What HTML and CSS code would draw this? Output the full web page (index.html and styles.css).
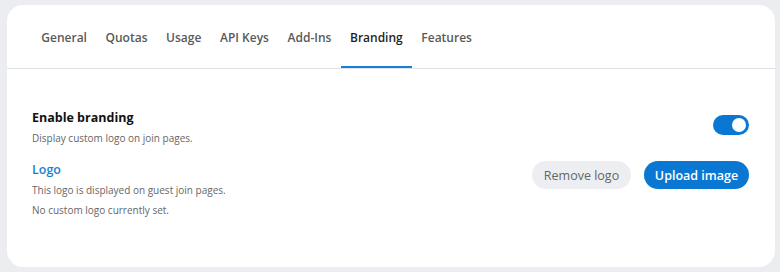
FILE: index.html
```html
<!DOCTYPE html>
<html lang="en">
<head>
    <meta charset="UTF-8">
    <meta name="viewport" content="width=device-width, initial-scale=1.0">
    <title>Branding settings</title>
    <link rel="stylesheet" href="styles.css">
</head>
<body>
    <div class="settings-card">
        <nav class="tabs">
            <a class="tab">General</a>
            <a class="tab">Quotas</a>
            <a class="tab">Usage</a>
            <a class="tab">API Keys</a>
            <a class="tab">Add-Ins</a>
            <a class="tab active">Branding</a>
            <a class="tab">Features</a>
        </nav>

        <div class="panel">
            <div class="setting-row">
                <div class="setting-text">
                    <h3>Enable branding</h3>
                    <p>Display custom logo on join pages.</p>
                </div>
                <label class="switch">
                    <input type="checkbox" checked>
                    <span class="slider"></span>
                </label>
            </div>

            <div class="setting-row logo-row">
                <div class="setting-text">
                    <h3 class="link-title">Logo</h3>
                    <p>This logo is displayed on guest join pages.</p>
                    <p>No custom logo currently set.</p>
                </div>
                <div class="actions">
                    <button class="btn btn-light">Remove logo</button>
                    <button class="btn btn-primary">Upload image</button>
                </div>
            </div>
        </div>
    </div>
</body>
</html>
```

FILE: styles.css
```css
* {
    box-sizing: border-box;
    margin: 0;
    padding: 0;
    font-family: 'Open Sans', 'Noto Sans', sans-serif;
}

body {
    background-color: #ebedf0;
    padding: 5px 5px 5px 7px;
    height: 272px;
}

.settings-card {
    background-color: #fff;
    border-radius: 16px;
    height: 262px;
    width: 768px;
    overflow: hidden;
}

.tabs {
    display: flex;
    padding: 0 25px;
    height: 64px;
    border-bottom: 1px solid #dfe1e5;
}

.tab {
    display: flex;
    align-items: center;
    padding: 3px 9.3px 0;
    font-size: 12px;
    font-weight: 600;
    color: #595959;
    border-bottom: 2px solid transparent;
}

.tab.active {
    color: #1f1f1f;
    border-bottom-color: #1a7fd4;
}

.panel {
    padding: 39px 26px 0 25px;
}

.setting-row {
    display: flex;
    justify-content: space-between;
    align-items: flex-start;
}

.setting-text h3 {
    font-size: 12.5px;
    font-weight: 700;
    color: #111;
    line-height: 20px;
}

.setting-text p {
    font-size: 10px;
    color: #666;
    line-height: 20px;
}

.switch {
    position: relative;
    width: 36px;
    height: 20px;
    margin-top: 7px;
}

.switch input {
    display: none;
}

.slider {
    position: absolute;
    inset: 0;
    border-radius: 10px;
    background-color: #bbb;
}

.switch input:checked + .slider {
    background-color: #0a78d2;
}

.slider::after {
    content: "";
    position: absolute;
    top: 3px;
    left: 3px;
    width: 14px;
    height: 14px;
    border-radius: 50%;
    background-color: #fff;
}

.switch input:checked + .slider::after {
    left: 19px;
}

.logo-row {
    margin-top: 12px;
}

.link-title {
    color: #1a7fd4 !important;
    font-weight: 600 !important;
}

.actions {
    display: flex;
    gap: 13px;
    margin-top: 1px;
}

.btn {
    height: 28px;
    border: none;
    border-radius: 14px;
    font-size: 12.5px;
    padding: 0;
    white-space: nowrap;
    cursor: pointer;
}

.btn-light {
    width: 99px;
    background-color: #eceef1;
    color: #666;
}

.btn-primary {
    width: 105px;
    background-color: #0a78d2;
    color: #fff;
    font-weight: 600;
}
```
